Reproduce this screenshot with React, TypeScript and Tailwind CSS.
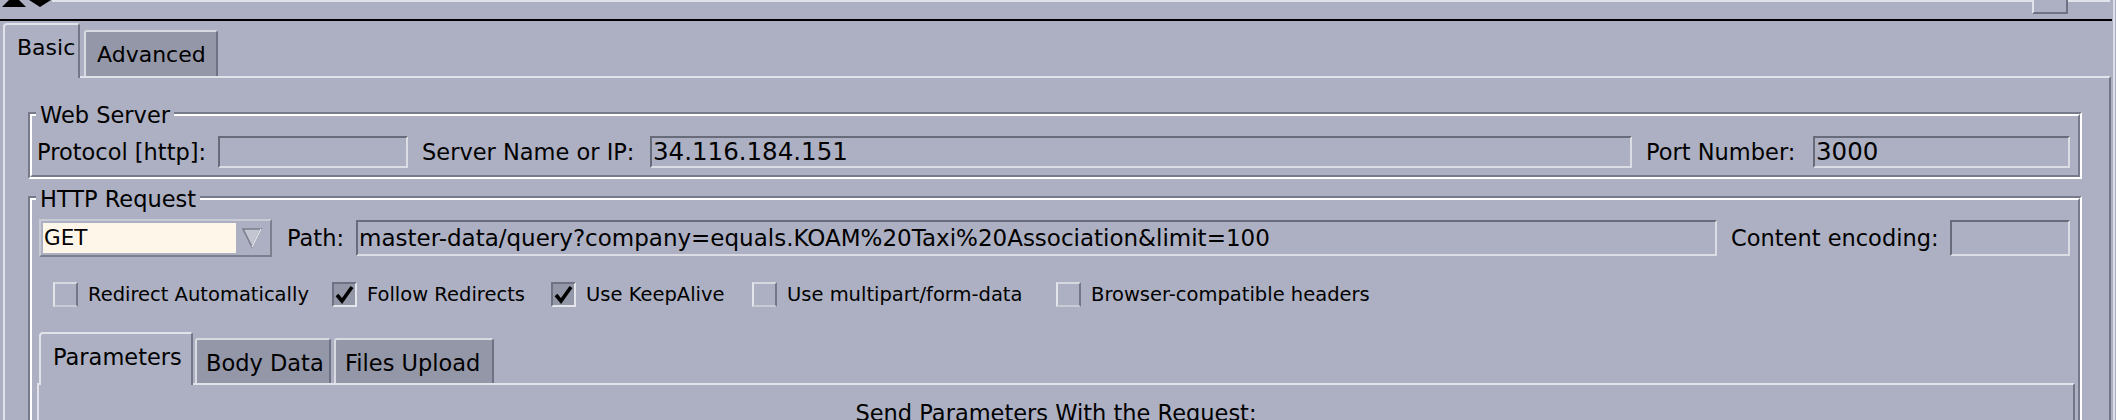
import React from "react";

const field =
  "flex items-center border-2 border-t-[#686b79] border-l-[#686b79] border-b-[#dcdde4] border-r-[#dcdde4] pl-[1px] overflow-hidden whitespace-nowrap text-black";

function Group({ title, children }: { title: string; children: React.ReactNode }) {
  return (
    <div className="relative border-2 border-t-[#777a8a] border-l-[#777a8a] border-b-white border-r-white">
      <div className="border-2 border-t-white border-l-white border-b-[#777a8a] border-r-[#777a8a]">
        {children}
      </div>
      <span className="absolute -top-[12px] left-[6px] bg-[#adb0c2] px-[4px] text-[22.5px] leading-[26px] text-black">
        {title}
      </span>
    </div>
  );
}

function CheckBox({ checked, label, className }: { checked: boolean; label: string; className: string }) {
  return (
    <div className={"flex items-center shrink-0 " + className}>
      {checked ? (
        <div className="w-[25px] h-[25px] shrink-0 border-2 border-t-[#6f7282] border-l-[#6f7282] border-b-[#e4e5eb] border-r-[#e4e5eb] bg-[#9497a8] flex items-center justify-center">
          <svg width="21" height="21" viewBox="0 0 21 21">
            <path d="M3 11 L8 17 L18 3" fill="none" stroke="#000" strokeWidth="3.6" strokeLinejoin="miter" />
          </svg>
        </div>
      ) : (
        <div className="w-[25px] h-[25px] shrink-0 border-2 border-t-[#d7d9e1] border-l-[#e4e5eb] border-b-[#c9cbd4] border-r-[#737686]" />
      )}
      <span className="ml-[10px] text-[19.5px] leading-[24px] text-black whitespace-nowrap">{label}</span>
    </div>
  );
}

export default function App() {
  return (
    <div className="w-[2116px] h-[420px] overflow-hidden bg-[#adb0c2] flex font-['DejaVu_Sans',sans-serif] text-black">
      <div className="w-[2113px] flex flex-col">
        {/* top strip */}
        <div className="h-[19px] flex shrink-0">
          <svg width="52" height="19" viewBox="0 0 52 19" className="shrink-0">
            <polygon points="2,7 26,7 19,0 9,0" fill="#000" />
            <polygon points="29,0 51,0 40,7" fill="#000" />
          </svg>
          <div className="flex-1 border-t-2 border-t-[#e2e3ea]" />
          <div className="w-[36px] h-[14px] border-l-2 border-l-[#e2e3ea] border-r-2 border-r-[#6f7282] border-b-2 border-b-[#6f7282]" />
          <div className="w-[42px] border-t-2 border-t-[#e2e3ea]" />
          <div className="w-[3px]" />
        </div>
        <div className="h-[2px] bg-black mr-[1px] shrink-0" />

        {/* outer tabbed pane */}
        <div className="ml-[3px] mr-[2px] flex flex-col flex-1">
          <div className="flex items-end h-[55px] shrink-0">
            <div className="relative z-10 -mb-[2px] h-[55px] w-[77px] bg-[#adb0c2] border-t-2 border-l-2 border-t-[#e2e3ea] border-l-[#e2e3ea] border-r-2 border-r-[#737686] rounded-tl-[4px] rounded-tr-[3px] pt-[10px] pl-[12px] text-[22px] leading-[26px]">
              Basic
            </div>
            <div className="ml-[4px] h-[46px] w-[134px] bg-[#9497a8] border-t-2 border-l-2 border-t-[#d8d9e1] border-l-[#d8d9e1] border-r-2 border-r-[#6f7282] rounded-tl-[3px] rounded-tr-[3px] pt-[10px] pl-[11px] text-[22px] leading-[26px]">
              Advanced
            </div>
          </div>
          <div className="flex-1 border-t-2 border-l-2 border-t-[#e2e3ea] border-l-[#e2e3ea] border-r-2 border-r-[#737686] pt-[34px] pl-[23px] pr-[27px] flex flex-col text-[22.5px] leading-[26px]">
            <Group title="Web Server">
              <div className="flex items-center pl-[5px] pr-[8px] pt-[20px] pb-[7px]">
                <span className="w-[181px] shrink-0 whitespace-nowrap">Protocol [http]:</span>
                <div className={field + " h-[32px] w-[190px] shrink-0"} />
                <span className="ml-[14px] w-[228px] shrink-0 whitespace-nowrap">Server Name or IP:</span>
                <div className={field + " h-[32px] flex-1 min-w-0 text-[24.5px]"}>34.116.184.151</div>
                <span className="ml-[14px] w-[167px] shrink-0 whitespace-nowrap">Port Number:</span>
                <div className={field + " h-[32px] w-[257px] shrink-0 text-[24.5px]"}>3000</div>
              </div>
            </Group>

            <div className="mt-[17px]">
              <Group title="HTTP Request">
                <div className="pt-[19px] h-[260px]">
                  <div className="flex items-center pl-[7px] pr-[8px] h-[38px]">
                    <div className="w-[233px] h-[38px] shrink-0 flex border-2 border-t-[#c9cbd4] border-l-[#c9cbd4] border-b-[#7c7f8e] border-r-[#7c7f8e] p-[2px]">
                      <div className="flex-1 bg-[#fff6ea] flex items-center pl-[1px] text-[21.5px]">GET</div>
                      <div className="w-[32px] flex items-center justify-center">
                        <svg width="22" height="22" viewBox="0 0 22 22">
                          <polygon points="2,2 20,2 11,20" fill="#c3c5d1" stroke="#7a7d8c" strokeWidth="1.6" />
                          <polygon points="11,20 20,2" fill="none" stroke="#e6e7ed" strokeWidth="1.4" />
                        </svg>
                      </div>
                    </div>
                    <span className="ml-[15px] w-[69px] shrink-0 whitespace-nowrap">Path:</span>
                    <div className={field + " h-[36px] flex-1 min-w-0 text-[23px]"}>
                      master-data/query?company=equals.KOAM%20Taxi%20Association&amp;limit=100
                    </div>
                    <span className="ml-[14px] w-[219px] shrink-0 whitespace-nowrap">Content encoding:</span>
                    <div className={field + " h-[36px] w-[120px] shrink-0"} />
                  </div>

                  <div className="flex items-center mt-[25px] h-[25px] pl-[21px]">
                    <CheckBox checked={false} label="Redirect Automatically" className="w-[279px]" />
                    <CheckBox checked={true} label="Follow Redirects" className="w-[219px]" />
                    <CheckBox checked={true} label="Use KeepAlive" className="w-[201px]" />
                    <CheckBox checked={false} label="Use multipart/form-data" className="w-[304px]" />
                    <CheckBox checked={false} label="Browser-compatible headers" className="w-[320px]" />
                  </div>

                  <div className="mt-[25px] ml-[5px] mr-[3px] flex flex-col">
                    <div className="flex items-end h-[51px] pl-[2px]">
                      <div className="relative z-10 -mb-[2px] h-[53px] w-[154px] bg-[#adb0c2] border-t-2 border-l-2 border-t-[#e2e3ea] border-l-[#e2e3ea] border-r-2 border-r-[#737686] rounded-tl-[4px] rounded-tr-[3px] pt-[10px] pl-[12px] text-[22.5px] leading-[26px] whitespace-nowrap">
                        Parameters
                      </div>
                      <div className="ml-[2px] h-[45px] w-[136px] bg-[#9497a8] border-t-2 border-l-2 border-t-[#d8d9e1] border-l-[#d8d9e1] border-r-2 border-r-[#6f7282] rounded-tl-[3px] rounded-tr-[3px] pt-[10px] pl-[9px] text-[22.5px] leading-[26px] whitespace-nowrap">
                        Body Data
                      </div>
                      <div className="ml-[3px] h-[45px] w-[160px] bg-[#9497a8] border-t-2 border-l-2 border-t-[#d8d9e1] border-l-[#d8d9e1] border-r-2 border-r-[#6f7282] rounded-tl-[3px] rounded-tr-[3px] pt-[10px] pl-[9px] text-[22.5px] leading-[26px] whitespace-nowrap">
                        Files Upload
                      </div>
                    </div>
                    <div className="h-[200px] border-t-2 border-l-2 border-t-[#e2e3ea] border-l-[#e2e3ea] border-r-2 border-r-[#737686] pt-[15px] text-center text-[22.5px] leading-[26px]">
                      Send Parameters With the Request:
                    </div>
                  </div>
                </div>
              </Group>
            </div>
          </div>
        </div>
      </div>
      <div className="w-[2px] bg-[#dfe0e7]" />
      <div className="w-[1px]" />
    </div>
  );
}
